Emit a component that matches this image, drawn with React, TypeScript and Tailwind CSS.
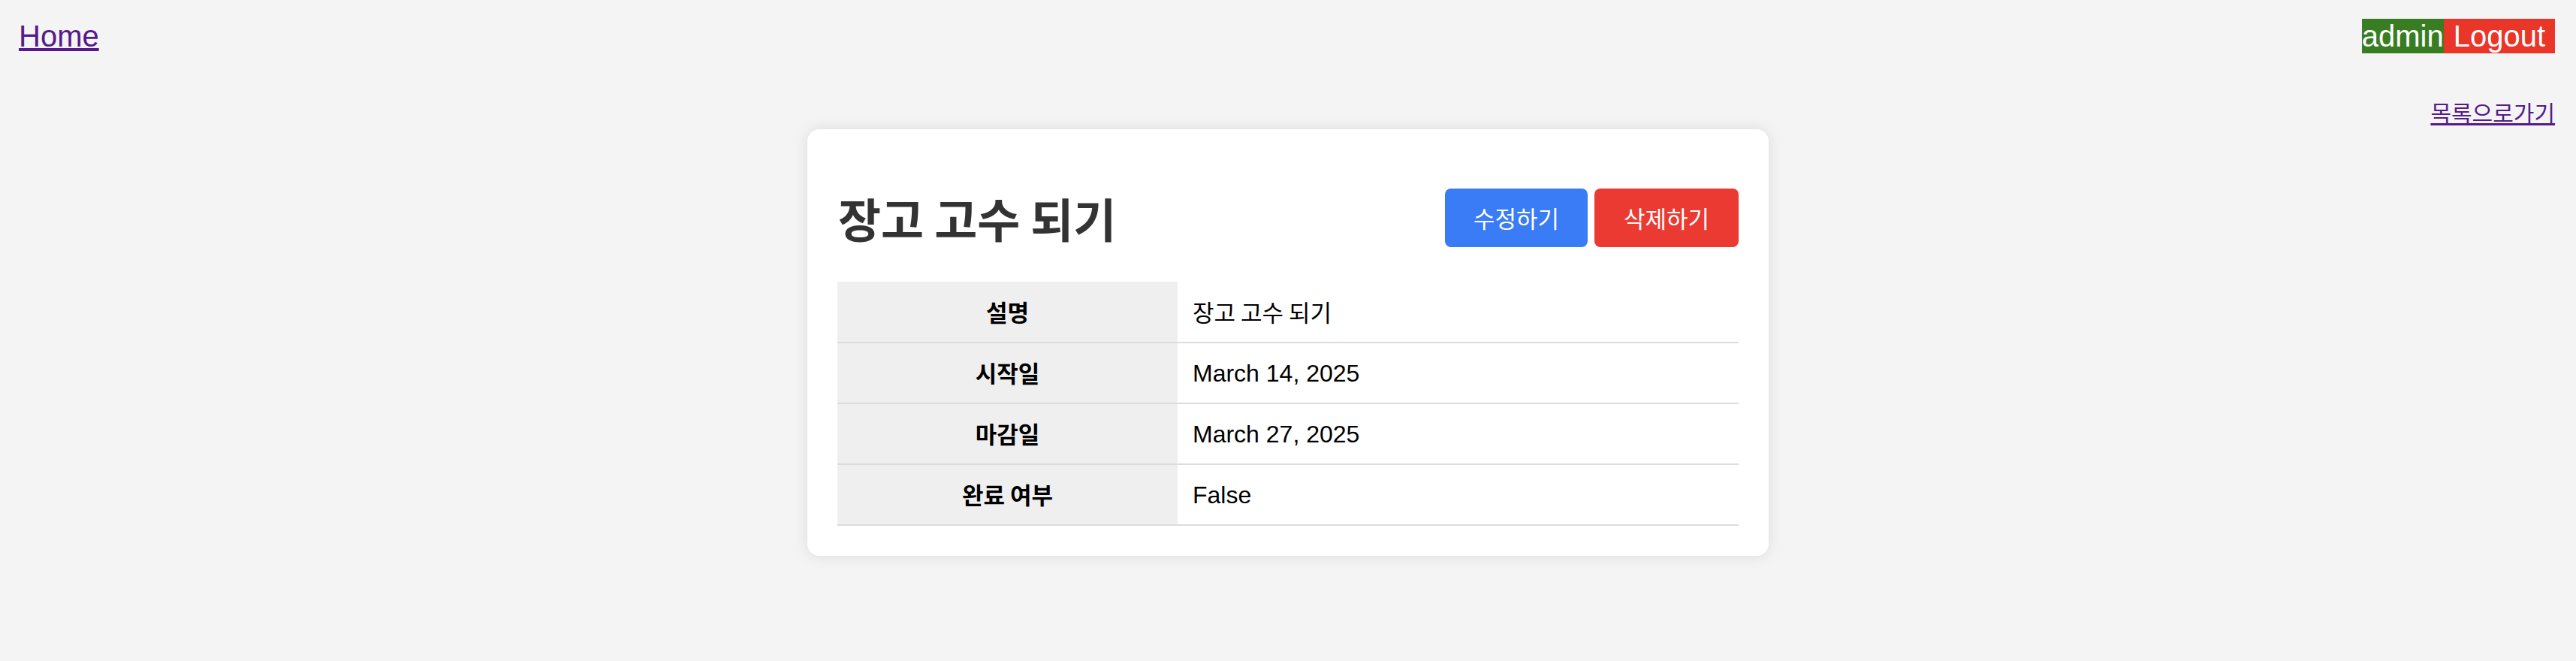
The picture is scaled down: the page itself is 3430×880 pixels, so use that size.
import React from "react";

const ko = "font-['Noto_Sans_CJK_KR',sans-serif]";

export default function App() {
  const rows: { label: string; value: string; korean?: boolean }[] = [
    { label: "설명", value: "장고 고수 되기", korean: true },
    { label: "시작일", value: "March 14, 2025" },
    { label: "마감일", value: "March 27, 2025" },
    { label: "완료 여부", value: "False" },
  ];
  return (
    <div className="min-h-[880px] w-full bg-[#f4f4f4] font-['Liberation_Sans','Noto_Sans_CJK_KR',sans-serif] text-black">
      <div className="flex items-start justify-between pl-[25px] pr-[28px] pt-[25px]">
        <a href="#" className="text-[40px] leading-[46px] text-[#551a8b] underline">
          Home
        </a>
        <div className="flex text-[40px] leading-[46px] text-white">
          <span className="bg-[#387d22]">admin</span>
          <span className="bg-[#ea3529] px-[13px]">Logout</span>
        </div>
      </div>
      <div className="mt-[57px] flex justify-end pr-[28px]">
        <a href="#" className={`${ko} text-[30px] leading-[42px] text-[#551a8b] underline`}>
          목록으로가기
        </a>
      </div>
      <div className="mx-auto mt-[2px] w-[1280px] rounded-[16px] bg-white px-[40px] pb-[40px] pt-[40px] shadow-[0_0_20px_rgba(0,0,0,0.1)]">
        <div className="flex h-[156px] items-center justify-between">
          <h2 className={`${ko} pl-[1px] text-[62px] font-bold leading-[84px] text-[#333333]`}>장고 고수 되기</h2>
          <div className="flex gap-[9px]">
            <button className={`${ko} h-[78px] w-[190px] rounded-[8px] bg-[#397cf6] text-[31px] text-white`}>
              수정하기
            </button>
            <button className={`${ko} h-[78px] w-[192px] rounded-[8px] bg-[#ea3a31] text-[31px] text-white`}>
              삭제하기
            </button>
          </div>
        </div>
        <table className="mt-[7px] w-full border-collapse">
          <tbody>
            {rows.map((r) => (
              <tr key={r.label} className="border-b-2 border-[#dcdcdc]">
                <th className={`${ko} h-[81px] w-[453px] bg-[#efefef] p-0 text-center text-[31px] font-bold`}>
                  {r.label}
                </th>
                <td
                  className={`h-[81px] pl-[20px] text-left ${
                    r.korean ? `${ko} text-[31px]` : "text-[32px]"
                  }`}
                >
                  {r.value}
                </td>
              </tr>
            ))}
          </tbody>
        </table>
      </div>
    </div>
  );
}
